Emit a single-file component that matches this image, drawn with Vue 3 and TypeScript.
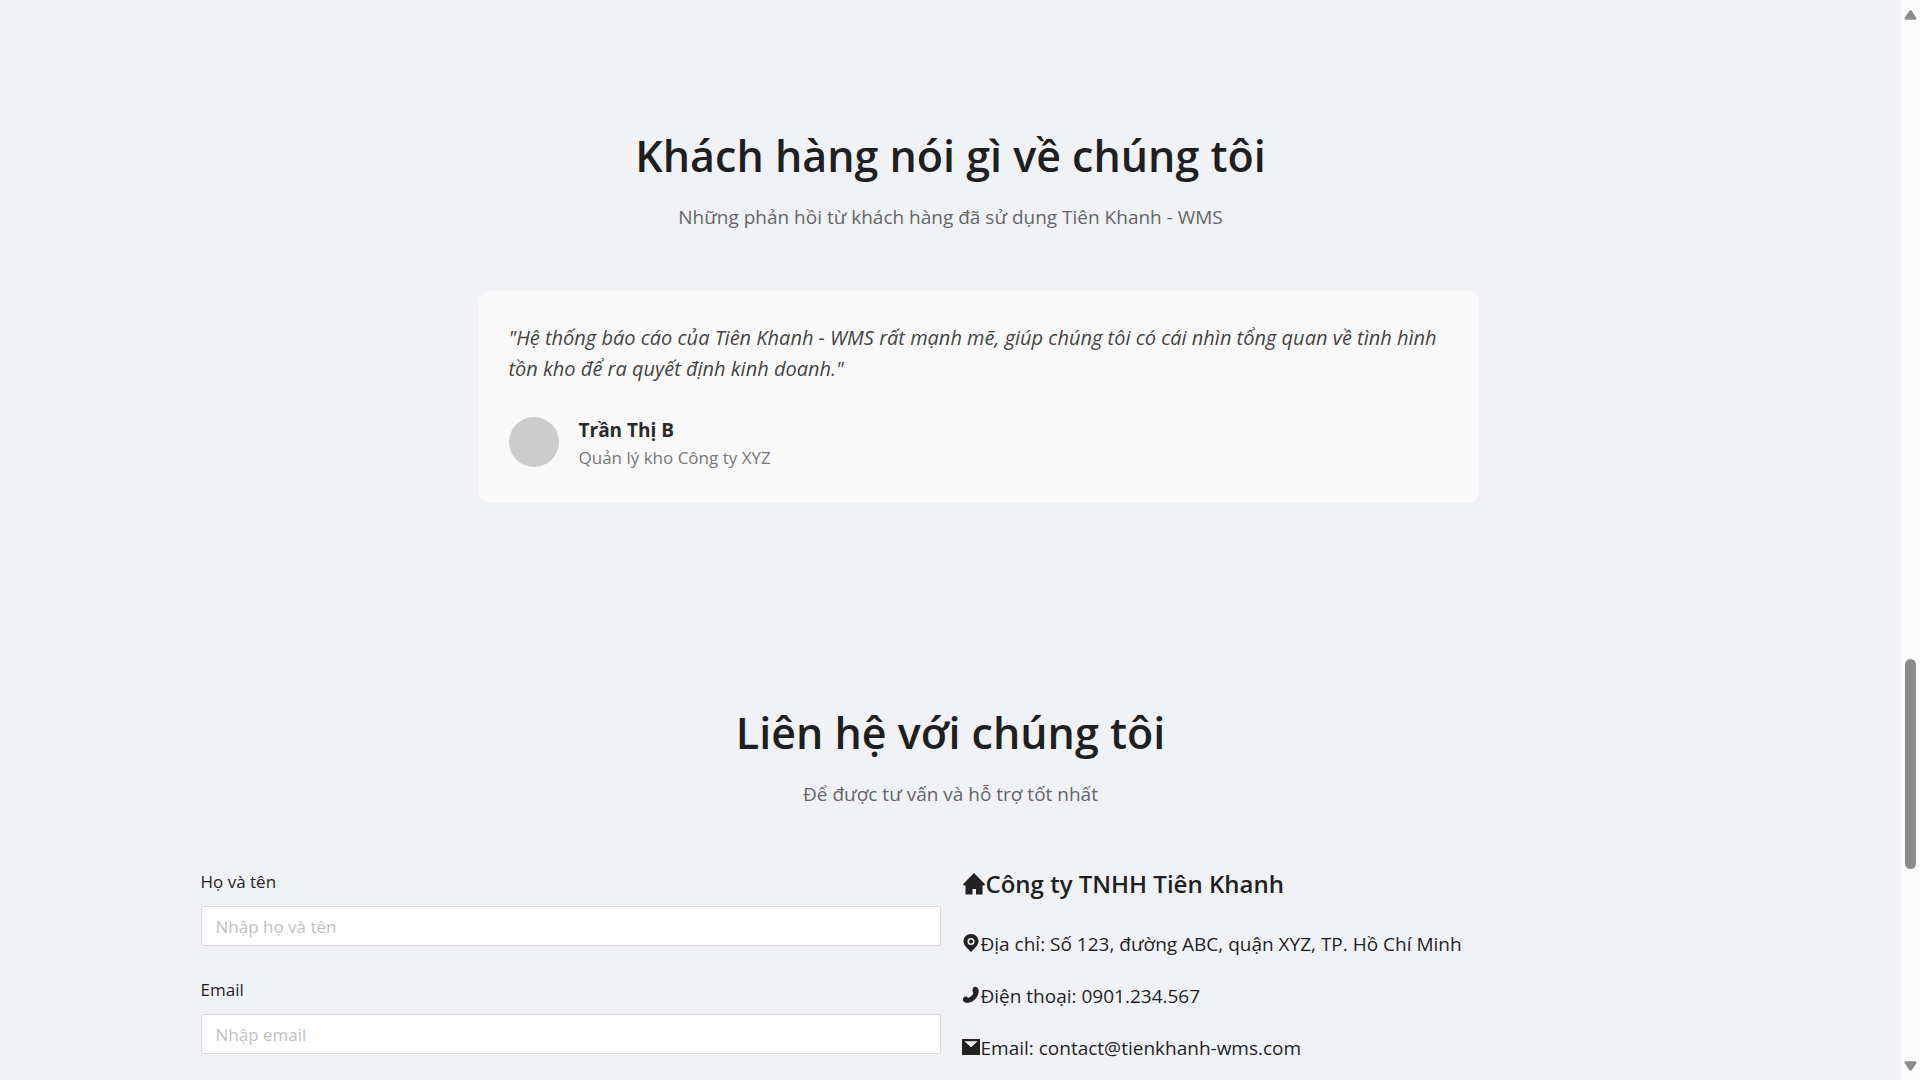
<script setup lang="ts">
import { ref } from 'vue'

interface Field {
  id: string
  label: string
  type: string
  placeholder: string
}

interface ContactLine {
  icon: 'pin' | 'phone' | 'mail'
  text: string
}

const fields: Field[] = [
  { id: 'name', label: 'Họ và tên', type: 'text', placeholder: 'Nhập họ và tên' },
  { id: 'email', label: 'Email', type: 'email', placeholder: 'Nhập email' },
]

const values = ref<Record<string, string>>({ name: '', email: '' })

const contactLines: ContactLine[] = [
  { icon: 'pin', text: 'Địa chỉ: Số 123, đường ABC, quận XYZ, TP. Hồ Chí Minh' },
  { icon: 'phone', text: 'Điện thoại: 0901.234.567' },
  { icon: 'mail', text: 'Email: contact@tienkhanh-wms.com' },
]
</script>

<template>
  <div class="page">
    <main class="content">
      <section class="section">
        <header class="section-header">
          <h2>Khách hàng nói gì về chúng tôi</h2>
          <p>Những phản hồi từ khách hàng đã sử dụng Tiên Khanh - WMS</p>
        </header>
        <div class="carousel">
          <figure class="testimonial">
            <blockquote>
              "Hệ thống báo cáo của Tiên Khanh - WMS rất mạnh mẽ, giúp chúng tôi có cái nhìn tổng quan về tình hình
              tồn kho để ra quyết định kinh doanh."
            </blockquote>
            <figcaption class="author">
              <span class="avatar"></span>
              <span class="author-text">
                <strong>Trần Thị B</strong>
                <span class="role">Quản lý kho Công ty XYZ</span>
              </span>
            </figcaption>
          </figure>
        </div>
      </section>

      <section class="section">
        <header class="section-header">
          <h2>Liên hệ với chúng tôi</h2>
          <p>Để được tư vấn và hỗ trợ tốt nhất</p>
        </header>
        <div class="contact">
          <form class="form" @submit.prevent>
            <div v-for="field in fields" :key="field.id" class="field">
              <label :for="field.id">{{ field.label }}</label>
              <input :id="field.id" v-model="values[field.id]" :type="field.type" :placeholder="field.placeholder" />
            </div>
          </form>
          <address class="info">
            <h3>
              <svg class="icon-home" viewBox="0 0 24 24" aria-hidden="true">
                <path d="M12 1 23 12.200 22.200 13.500H20.500V22.500H14V17H10.500V22.500H3.500V13.500H1.800L1 12.200Z" />
              </svg>
              <span>Công ty TNHH Tiên Khanh</span>
            </h3>
            <p v-for="line in contactLines" :key="line.icon">
              <svg class="icon" viewBox="0 0 18 18" aria-hidden="true">
                <path
                  v-if="line.icon === 'pin'"
                  fill-rule="evenodd"
                  d="M9 0C4.900 0 1.500 3.200 1.500 7.100C1.500 11.800 6 15 9 18C12 15 16.500 11.800 16.500 7.100C16.500 3.200 13.100 0 9 0ZM9 3.900A3.500 3.500 0 1 1 9 10.900A3.500 3.500 0 0 1 9 3.900ZM9 5.400A2 2 0 1 0 9 9.400A2 2 0 0 0 9 5.400Z"
                />
                <path
                  v-else-if="line.icon === 'phone'"
                  d="M11.200 1.800C11.800 .6 13.200 .3 14.400 1C16.300 2 17.100 4 16.600 6.500C15.600 11.600 11.800 15.500 7.500 16.600C4.800 17.300 2.300 16.700 1.300 15C.5 13.500 .9 11.700 2.300 10.900C3.700 10.200 5.200 10.700 6 12C8.400 11.600 10.900 9.200 11.400 6.800C10.200 5.500 10.300 3.400 11.200 1.800Z"
                />
                <path v-else fill-rule="evenodd" d="M0 1H18V17H0ZM2.300 3.200 9 9.200 15.700 3.200Z" />
              </svg>
              <span>{{ line.text }}</span>
            </p>
          </address>
        </div>
      </section>
    </main>

    <div class="scrollbar" aria-hidden="true">
      <svg viewBox="0 0 14 10"><path d="M7 0Q8 0 9 1.400L13.200 8Q14 10 12.200 10H1.800Q0 10 .8 8L5 1.400Q6 0 7 0Z" /></svg>
      <div class="track"><div class="thumb"></div></div>
      <svg viewBox="0 0 14 10"><path d="M7 10Q8 10 9 8.600L13.200 2Q14 0 12.200 0H1.800Q0 0 .8 2L5 8.600Q6 10 7 10Z" /></svg>
    </div>
  </div>
</template>

<style>
body {
  margin: 0;
  background: #f0f2f5;
}
</style>

<style scoped>
* {
  box-sizing: border-box;
}

.page {
  display: flex;
  height: 100vh;
  overflow: hidden;
  background: #f0f2f5;
  color: #1f1f1f;
  font-family: "Open Sans", "Noto Sans", sans-serif;
  font-size: 18px;
}

.content {
  flex: 1;
  min-width: 0;
}

.section {
  max-width: 1500px;
  margin: 0 auto;
  padding: 124px 0 74px;
}

.section-header {
  margin-bottom: 58px;
  text-align: center;
}

h2 {
  margin: 0 0 13px;
  font-size: 43px;
  font-weight: 600;
  line-height: 64px;
}

.section-header p {
  margin: 0;
  color: #666;
  font-size: 19px;
  line-height: 32px;
}

.carousel {
  padding-left: 56px;
}

.testimonial {
  max-width: 1000px;
  margin: 0 auto;
  padding: 31px 30px 31px;
  border-radius: 10px;
  background: #f9f9f9;
}

blockquote {
  margin: 0 0 30px;
  color: #444;
  font-size: 20px;
  font-style: italic;
  line-height: 31px;
}

.author {
  display: flex;
  align-items: flex-start;
  gap: 20px;
}

.avatar {
  width: 50px;
  height: 50px;
  margin-top: 3px;
  border-radius: 50%;
  background: #ccc;
}

.author-text {
  display: flex;
  flex-direction: column;
  padding-top: 2px;
  line-height: 28px;
}

.author-text strong {
  color: #2a2a2a;
  font-size: 19px;
  font-weight: 700;
}

.role {
  color: #777;
  font-size: 17px;
}

.contact {
  display: grid;
  grid-template-columns: 1fr 1fr;
  gap: 20px;
}

.form {
  display: flex;
  flex-direction: column;
  gap: 30px;
}

.field {
  display: flex;
  flex-direction: column;
  gap: 10px;
}

label {
  font-size: 17px;
  line-height: 28px;
}

input {
  width: 100%;
  height: 40px;
  padding: 0 14px;
  border: 1px solid #d9d9d9;
  border-radius: 2px;
  background: #fff;
  color: #1f1f1f;
  font-family: inherit;
  font-size: 17px;
}

input::placeholder {
  color: #bfbfbf;
  opacity: 1;
}

.info {
  padding-left: 1px;
  font-style: normal;
}

h3 {
  display: flex;
  align-items: center;
  margin: 0 0 28px;
  font-size: 24px;
  font-weight: 600;
  line-height: 32px;
}

.info p {
  display: flex;
  align-items: center;
  margin: 0 0 20px;
  font-size: 19px;
  line-height: 32px;
}

.icon-home {
  width: 24px;
  height: 24px;
  flex: none;
}

.icon {
  width: 18px;
  height: 18px;
  flex: none;
  margin: 0 1px 2px 0;
}

svg {
  fill: #222;
}

.scrollbar {
  display: flex;
  flex-direction: column;
  align-items: center;
  width: 19px;
  padding: 10px 0 9px;
  background: #fcfcfc;
}

.scrollbar svg {
  width: 13px;
  height: 10px;
  fill: #8b8b8b;
}

.track {
  display: flex;
  flex: 1;
  flex-direction: column;
  width: 11px;
  padding-top: 639px;
}

.thumb {
  height: 210px;
  border-radius: 6px;
  background: #8b8b8b;
}
</style>
